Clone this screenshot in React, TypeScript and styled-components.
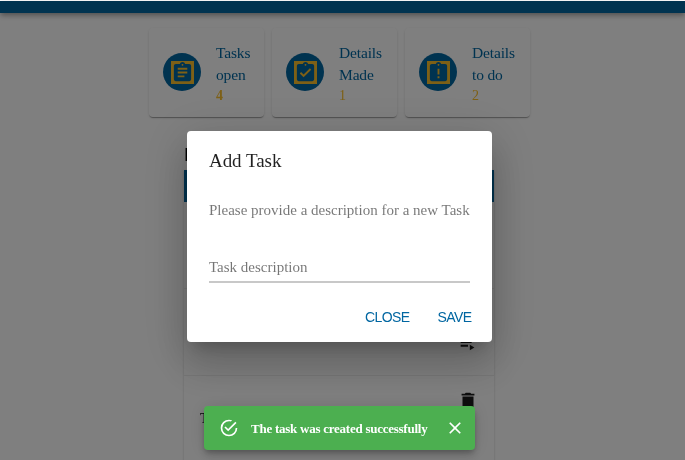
import React from 'react';
import styled, { createGlobalStyle } from 'styled-components';

const blue = '#0066a1';
const gold = '#fbc02d';

const GlobalStyle = createGlobalStyle`
  * { box-sizing: border-box; }
  body { margin: 0; background: #fff; overflow: hidden; font-family: 'Liberation Serif', serif; -webkit-font-smoothing: antialiased; }
`;

const Page = styled.div`
  height: 460px;
  padding-top: 1px;
  overflow: hidden;
  will-change: transform;
`;

const AppBar = styled.header`
  height: 12px;
  background: ${blue};
  box-shadow: 0 2px 4px -1px rgba(0,0,0,.2), 0 4px 5px rgba(0,0,0,.14), 0 1px 10px rgba(0,0,0,.12);
`;

const Stats = styled.section`
  display: flex;
  gap: 8px;
  padding: 15px 0 0 149px;
`;

const Card = styled.article<{ $width: number }>`
  display: flex;
  align-items: center;
  width: ${p => p.$width}px;
  height: 89px;
  padding: 0 0 1px 14px;
  border-radius: 4px;
  box-shadow: 0 2px 1px -1px rgba(0,0,0,.2), 0 1px 1px rgba(0,0,0,.14), 0 1px 3px rgba(0,0,0,.12);
`;

const Avatar = styled.div`
  display: grid;
  place-items: center;
  flex: none;
  width: 38px;
  height: 38px;
  border-radius: 50%;
  background: ${blue};
  svg { width: 23px; height: 23px; background: ${gold}; fill: ${blue}; }
`;

const StatText = styled.div`
  flex: none;
  margin: 3px 0 0 15px;
  width: 48px;
  color: ${blue};
  font-size: 15.5px;
  line-height: 22px;
  letter-spacing: -.15px;
`;

const StatCount = styled.div<{ $bold?: boolean }>`
  color: ${gold};
  font-size: 14px;
  font-weight: ${p => (p.$bold ? 700 : 400)};
  line-height: 19px;
`;

const Tasks = styled.main`
  width: 310px;
  margin: 26px 0 0 184px;
`;

const Heading = styled.h2`
  margin: 0;
  height: 27px;
  font: 400 19px/23px 'Liberation Sans', sans-serif;
`;

const Table = styled.div`
  box-shadow: 0 2px 1px -1px rgba(0,0,0,.2), 0 1px 1px rgba(0,0,0,.14), 0 1px 3px rgba(0,0,0,.12);
`;

const TableHead = styled.div`
  height: 32px;
  background: ${blue};
`;

const Row = styled.div<{ $height: number }>`
  display: flex;
  justify-content: space-between;
  align-items: center;
  height: ${p => p.$height}px;
  padding: 0 15px 0 16px;
  border-bottom: 1px solid #eee;
  font-size: 14px;
`;

const RowActions = styled.div`
  display: flex;
  flex-direction: column;
  justify-content: space-between;
  height: 58px;
  padding-bottom: 7px;
  svg { width: 22px; height: 22px; fill: #1c1c1c; }
`;

const Backdrop = styled.div`
  position: fixed;
  inset: 1px 0 0;
  background: rgba(0,0,0,.5);
`;

const Dialog = styled.div`
  position: fixed;
  left: 186.5px;
  top: 131px;
  width: 305px;
  height: 211px;
  padding: 0 22px 0 22.5px;
  background: #fff;
  border-radius: 4px;
  box-shadow: 0 11px 15px -7px rgba(0,0,0,.2), 0 24px 38px 3px rgba(0,0,0,.14), 0 9px 46px 8px rgba(0,0,0,.12);
`;

const DialogTitle = styled.h1`
  margin: 0;
  padding-top: 17px;
  color: rgba(0,0,0,.87);
  font-size: 19px;
  font-weight: 400;
  line-height: 26px;
  letter-spacing: -.05px;
`;

const DialogText = styled.p`
  margin: 24px 0 0;
  color: rgba(0,0,0,.54);
  font-size: 15px;
  line-height: 24px;
  white-space: nowrap;
`;

const Field = styled.label`
  display: block;
  height: 42px;
  margin-top: 19px;
  padding-top: 14px;
  border-bottom: 2px solid #c8c8c8;
  color: rgba(0,0,0,.54);
  font-size: 15px;
  line-height: 24px;
`;

const Actions = styled.div`
  display: flex;
  justify-content: flex-end;
  gap: 28px;
  margin: 23px -2px 0 0;
`;

const TextButton = styled.button`
  padding: 0;
  border: 0;
  background: none;
  color: ${blue};
  font: 14px/22px 'Liberation Sans', sans-serif;
  letter-spacing: -.6px;
  text-transform: uppercase;
`;

const Snackbar = styled.div`
  position: fixed;
  left: 204px;
  top: 406px;
  display: flex;
  align-items: center;
  width: 271px;
  height: 44px;
  padding: 0 10px 0 15px;
  border-radius: 4px;
  background: #4caf50;
  color: #fff;
  box-shadow: 0 3px 5px -1px rgba(0,0,0,.2), 0 6px 10px rgba(0,0,0,.14), 0 1px 18px rgba(0,0,0,.12);
  svg { width: 20px; height: 20px; fill: #fff; flex: none; }
`;

const Message = styled.span`
  flex: 1;
  padding: 2px 0 0 12px;
  font-size: 13px;
  font-weight: 700;
  line-height: 20px;
  letter-spacing: -.25px;
  white-space: nowrap;
`;

const Icon = ({ d }: { d: string }) => (
  <svg viewBox="0 0 24 24"><path d={d} /></svg>
);

const board = 'M19 3h-4.18C14.4 1.84 13.3 1 12 1s-2.4.84-2.82 2H5c-1.1 0-2 .9-2 2v14c0 1.1.9 2 2 2h14c1.1 0 2-.9 2-2V5c0-1.1-.9-2-2-2zm-7 0c.55 0 1 .45 1 1s-.45 1-1 1-1-.45-1-1 .45-1 1-1z';
const icons = {
  open: board + 'm2 14H7v-2h7v2zm3-4H7v-2h10v2zm0-4H7V7h10v2z',
  made: board + 'm-2 14l-4-4 1.41-1.41L10 14.17l6.59-6.59L18 9l-8 8z',
  todo: board + 'M13 18h-2v-2h2v2zm0-4h-2V8h2v6z',
  remove: 'M6 19c0 1.1.9 2 2 2h8c1.1 0 2-.9 2-2V7H6v12zM19 4h-3.5l-1-1h-5l-1 1H5v2h14V4z',
  details: 'M4 10h12v2H4zm0-4h12v2H4zm0 8h8v2H4zm10 0v6l5-3z',
  success: 'M20 12a8 8 0 1 1-8-8c.76 0 1.5.11 2.2.31l1.57-1.57A9.82 9.82 0 0 0 12 2a10 10 0 1 0 10 10M7.91 10.08L6.5 11.5 11 16 21 6l-1.41-1.42L11 13.17l-3.09-3.09z',
  close: 'M19 6.41L17.59 5 12 10.59 6.41 5 5 6.41 10.59 12 5 17.59 6.41 19 12 13.41 17.59 19 19 17.59 13.41 12z',
};

const stats = [
  { icon: icons.open, label: 'Tasks open', count: 4, width: 115, bold: true },
  { icon: icons.made, label: 'Details Made', count: 1, width: 125 },
  { icon: icons.todo, label: 'Details to do', count: 2, width: 125 },
];

const TaskRow = ({ height, name }: { height: number; name: string }) => (
  <Row $height={height}>
    <span>{name}</span>
    <RowActions>
      <Icon d={icons.remove} />
      <Icon d={icons.details} />
    </RowActions>
  </Row>
);

export default function App() {
  return (
    <>
      <GlobalStyle />
      <Page>
        <AppBar />
        <Stats>
          {stats.map(s => (
            <Card key={s.label} $width={s.width}>
              <Avatar><Icon d={s.icon} /></Avatar>
              <StatText>
                {s.label.split(' ')[0]}<br />{s.label.split(' ').slice(1).join(' ')}
                <StatCount $bold={s.bold}>{s.count}</StatCount>
              </StatText>
            </Card>
          ))}
        </Stats>
        <Tasks>
          <Heading>List</Heading>
          <Table>
            <TableHead />
            <Row $height={87} />
            <TaskRow height={87} name="Task" />
            <TaskRow height={86} name="Task" />
          </Table>
        </Tasks>
      </Page>
      <Backdrop />
      <Dialog role="dialog">
        <DialogTitle>Add Task</DialogTitle>
        <DialogText>Please provide a description for a new Task</DialogText>
        <Field>Task description</Field>
        <Actions>
          <TextButton>Close</TextButton>
          <TextButton>Save</TextButton>
        </Actions>
      </Dialog>
      <Snackbar role="status">
        <Icon d={icons.success} />
        <Message>The task was created successfully</Message>
        <Icon d={icons.close} />
      </Snackbar>
    </>
  );
}
